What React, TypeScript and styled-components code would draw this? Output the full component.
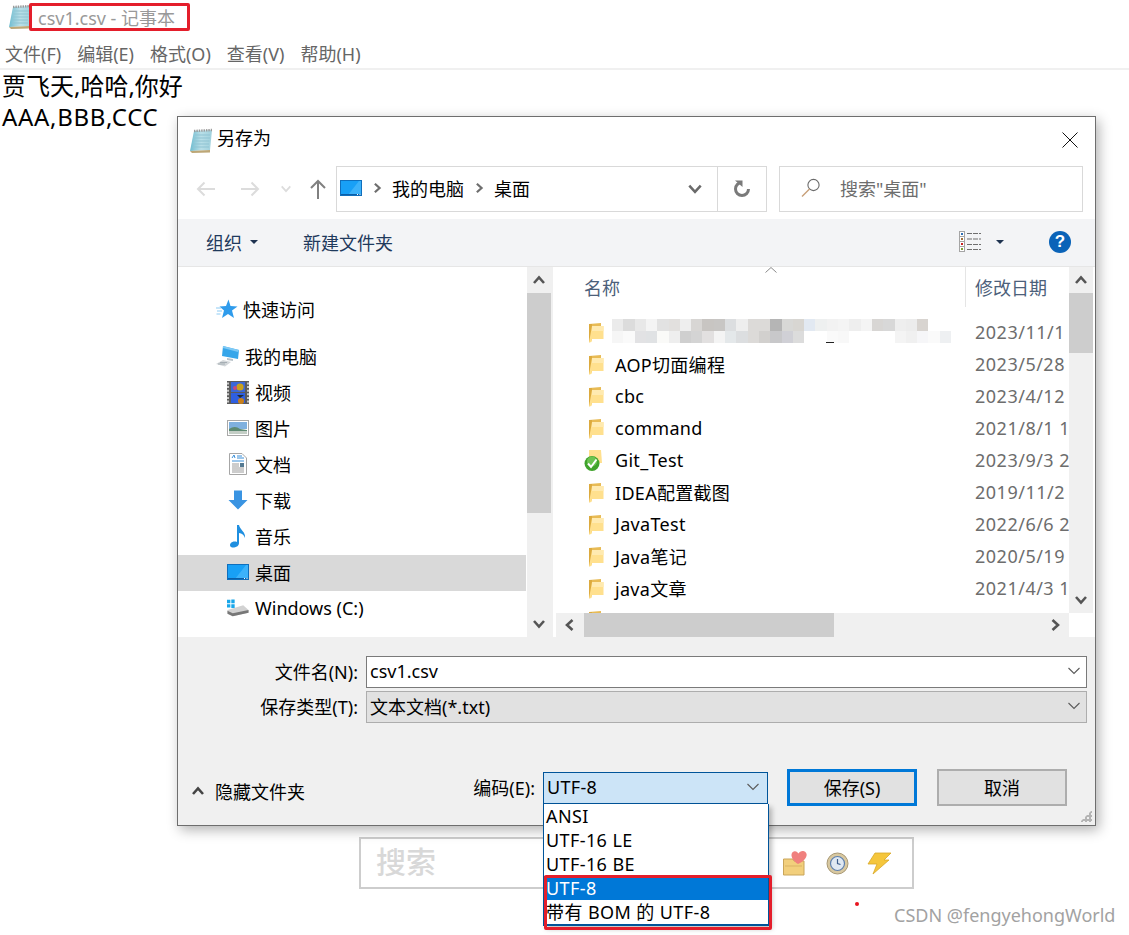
import React from 'react';
import styled, { createGlobalStyle } from 'styled-components';

const FONT = '"Noto Sans", "Noto Sans CJK SC", sans-serif';

const GlobalStyle = createGlobalStyle`
	html, body {
		margin: 0;
		padding: 0;
		background: #fff;
	}
	body {
		width: 1129px;
		height: 935px;
		overflow: hidden;
		font-family: ${FONT};
		color: #000;
	}
	* {
		box-sizing: border-box;
	}
`;

const NotepadIcon = ({ id }: { id: string }) => (
	<svg width="24" height="26" viewBox="0 0 24 26">
		<defs>
			<linearGradient id={id} x1="0" y1="0" x2="1" y2="0">
				<stop offset="0" stopColor="#6fbcd0" />
				<stop offset="0.5" stopColor="#b9dfe8" />
				<stop offset="1" stopColor="#9fd0dc" />
			</linearGradient>
		</defs>
		<path d="M5 3 L23 2 L21 22 L1 23 Z" fill={`url(#${id})`} />
		<path d="M6 7H21M5.5 10H21M5 13H20.5M4.5 16H20M4 19H20" stroke="#8fc3d2" strokeWidth="1" />
		<path d="M1 23 L21 22 L21 24.5 L3 25 Z" fill="#bda777" />
		<path d="M5 3 L23 2" stroke="#9a9a9a" strokeWidth="2.4" strokeDasharray="1.4 1" />
	</svg>
);

const DesktopIcon = ({ w, h }: { w: number; h: number }) => (
	<svg width={w} height={h} viewBox="0 0 22 16">
		<rect x="0.5" y="0.5" width="21" height="15" fill="#18a0f6" stroke="#0f6fbd" />
		<path d="M8 15 L19 1 H21 V15 Z" fill="#3cb2fa" />
		<path d="M1 14.5H21" stroke="#0b5ea8" />
		<path d="M17 14.5h1M19.5 14.5h1" stroke="#fff" />
	</svg>
);

const FolderIcon = () => (
	<svg width="16" height="21" viewBox="0 0 16 21">
		<path d="M1 2 L13 1 L13 5 L1 5 Z" fill="#e8bb55" />
		<path d="M1 2 L4 2 L4 18 L1 20.500 Z" fill="#dcaa3e" />
		<path d="M4 4 L15.500 4 L15.500 17 L4 17 L3.500 20 L1 20.500 Z" fill="#ffe08e" />
		<path d="M4 4 L15.500 4 L15.500 9 L4 9 Z" fill="#ffeab0" />
	</svg>
);

const GitFolderIcon = () => (
	<svg width="20" height="23" viewBox="0 0 20 23">
		<path d="M5 1 L17 1 L18 14 L5 14 Z" fill="#ffe08e" />
		<circle cx="8" cy="14.5" r="7.5" fill="#3fa32b" />
		<circle cx="8" cy="12.5" r="5" fill="#7fd062" opacity="0.7" />
		<path d="M4 14.5 L7 18 L12.5 10.5" fill="none" stroke="#fff" strokeWidth="2" />
	</svg>
);

const StarIcon = () => (
	<svg width="22" height="20" viewBox="0 0 22 20">
		<path d="M12.5 0.5 L14.5 7 L21.5 7.5 L16 11.5 L18 19 L12 15 L6 19 L8 11.5 L3.5 7.5 L10 7 Z" fill="#2f9cec" />
		<path d="M0 9h5M1 12h5M0.5 15h4" stroke="#8ccbf4" strokeWidth="1" />
	</svg>
);

const ComputerIcon = () => (
	<svg width="24" height="22" viewBox="0 0 24 22">
		<path d="M7 1 L23 5 L22 14 L6 11 Z" fill="#36a6ea" />
		<path d="M7 1 L23 5 L22 7 L7 3 Z" fill="#7fcaf5" />
		<path d="M11 13 L17 14 L17 16 L11 15 Z" fill="#b9c2c9" />
		<path d="M0 19 L7 15 L15 17 L9 21.5 Z" fill="#d3d7da" />
		<path d="M2 19h7M4 17.5h7" stroke="#9aa3aa" strokeWidth="0.8" />
	</svg>
);

const FilmIcon = () => (
	<svg width="22" height="23" viewBox="0 0 22 23">
		<rect width="22" height="23" fill="#5b5b5b" />
		<path d="M1 1.5v20M21 1.5v20" stroke="#e6e6e6" strokeWidth="1.6" strokeDasharray="2 1.6" />
		<rect x="4" y="1" width="14" height="10" fill="#3b67d8" />
		<rect x="4" y="12" width="14" height="10" fill="#2f5fe0" />
		<circle cx="13" cy="6" r="3.6" fill="#c9a01c" />
		<circle cx="8" cy="7" r="2" fill="#c84a7a" />
		<circle cx="14" cy="20" r="3" fill="#c9801c" />
		<path d="M10 14 L17 14 L13 17 Z" fill="#1e2a33" />
	</svg>
);

const PictureIcon = () => (
	<svg width="22" height="16" viewBox="0 0 22 16">
		<rect x="0.5" y="0.5" width="21" height="15" fill="#fff" stroke="#a8a8a8" />
		<rect x="2" y="2" width="18" height="7" fill="#7fb0de" />
		<path d="M2 9 Q8 5 13 9 L20 10 V14 H2 Z" fill="#5e8a72" />
		<rect x="2" y="11" width="18" height="3" fill="#c4cec6" />
	</svg>
);

const DocIcon = () => (
	<svg width="18" height="22" viewBox="0 0 18 22">
		<path d="M0.5 0.5 H13 L17.5 5 V21.5 H0.5 Z" fill="#fff" stroke="#a6a6a6" />
		<path d="M3 5l2-3 1 3M8 3h5M8 5h7M3 8h12" stroke="#3a8fd8" strokeWidth="1" fill="none" />
		<path d="M3 11h7M3 13h7M3 15h12M3 17h12M3 19h12" stroke="#9a9a9a" strokeWidth="1" />
		<rect x="11" y="10" width="4" height="4" fill="#557a92" />
	</svg>
);

const DownloadIcon = () => (
	<svg width="20" height="20" viewBox="0 0 20 20">
		<path d="M6 0.5 H14 V10 H19.5 L10 19.5 L0.5 10 H6 Z" fill="#3a94e2" />
	</svg>
);

const MusicIcon = () => (
	<svg width="18" height="23" viewBox="0 0 18 23">
		<path d="M8 0 L10 0 C11 5 17 7 16 13 C15 10 13 8.5 10 8 L10 18 C10 21 7 22.5 4 22.5 C1 22.5 0.5 20 1.5 18.5 C3 16.5 6 16 8 17 Z" fill="#1f8fe0" />
	</svg>
);

const DriveIcon = () => (
	<svg width="23" height="18" viewBox="0 0 23 18">
		<path d="M0.5 11 L17 6 L22.5 11 L22.5 14 L6 17.5 L0.5 15 Z" fill="#d2d2d2" />
		<path d="M0.5 12 L6 14.5 L22.5 11 L22.5 14 L6 17.5 L0.5 15 Z" fill="#777" />
		<path d="M0 0.5h3.5v3.5h-3.5zM4.5 0h3.5v4h-3.5zM0 5h3.5v3.5h-3.5zM4.5 5h3.5v4h-3.5z" fill="#19a7ea" />
	</svg>
);

const Chevron = ({ dir, color = '#555', size = 14, weight = 2.6 }: { dir: 'up' | 'down' | 'left' | 'right'; color?: string; size?: number; weight?: number }) => {
	const d = {
		up: 'M2 10 L7 4.5 L12 10',
		down: 'M2 4 L7 9.5 L12 4',
		left: 'M9.5 2 L4 7 L9.5 12',
		right: 'M4.5 2 L10 7 L4.5 12',
	}[dir];
	return (
		<svg width={size} height={size} viewBox="0 0 14 14">
			<path d={d} fill="none" stroke={color} strokeWidth={weight} />
		</svg>
	);
};

const ComboArrow = () => (
	<svg width="12" height="8" viewBox="0 0 12 8">
		<path d="M0.5 1 L6 6.5 L11.5 1" fill="none" stroke="#5a5a5a" strokeWidth="1.1" />
	</svg>
);

const Caret = () => (
	<svg width="8" height="4" viewBox="0 0 8 4">
		<path d="M0 0 H8 L4 4 Z" fill="#1f3350" />
	</svg>
);

const NavArrow = ({ flip, color }: { flip?: boolean; color: string }) => (
	<svg width="20" height="16" viewBox="0 0 20 16" style={flip ? { transform: 'scaleX(-1)' } : undefined}>
		<path d="M19 8 H2 M8.5 1.5 L2 8 L8.5 14.5" fill="none" stroke={color} strokeWidth="2" />
	</svg>
);

const UpArrow = () => (
	<svg width="16" height="20" viewBox="0 0 16 20">
		<path d="M8 20 V2 M1 9 L8 2 L15 9" fill="none" stroke="#808080" strokeWidth="2" />
	</svg>
);

const RefreshIcon = () => (
	<svg width="18" height="18" viewBox="0 0 18 18">
		<path d="M15.5 9 A6.5 6.5 0 1 1 9 2.5" fill="none" stroke="#7a7a7a" strokeWidth="3" />
		<path d="M2 0.5 H9.5 V7 Z" fill="#7a7a7a" />
	</svg>
);

const SearchGlass = () => (
	<svg width="20" height="20" viewBox="0 0 20 20">
		<circle cx="12.5" cy="7" r="5.6" fill="none" stroke="#6b6b6b" strokeWidth="1.1" />
		<path d="M8.5 11 L1 18.5" stroke="#c8a079" strokeWidth="1.4" />
	</svg>
);

const CloseIcon = () => (
	<svg width="16" height="16" viewBox="0 0 16 16">
		<path d="M0.5 0.5 L15.5 15.5 M15.5 0.5 L0.5 15.5" stroke="#111" strokeWidth="1" />
	</svg>
);

const ViewIcon = () => (
	<svg width="22" height="21" viewBox="0 0 22 21">
		<rect x="0.5" y="0.5" width="5" height="20" fill="#fff" stroke="#a5a5a5" />
		<path d="M1 5.5h5M1 10.5h5M1 15.5h5" stroke="#a5a5a5" />
		<rect x="2" y="2" width="2" height="2" fill="#2f6fb5" />
		<rect x="2" y="7" width="2" height="2" fill="#a0703a" />
		<rect x="2" y="12" width="2" height="2" fill="#c92020" />
		<rect x="2" y="17" width="2" height="2" fill="#7fa038" />
		<path d="M8 2.5h14M8 8h14M8 13.500h14M8 18.500h14" stroke="#6f6f6f" strokeDasharray="5 1" />
	</svg>
);

const HelpBadge = styled.span`
	display: flex;
	align-items: center;
	justify-content: center;
	width: 22px;
	height: 22px;
	border-radius: 50%;
	background: #0a63b8;
	color: #fff;
	font: bold 17px "Liberation Sans", sans-serif;
`;

const FolderHeart = () => (
	<svg width="25" height="26" viewBox="0 0 25 26">
		<path d="M0.500 9 H10 L11 11 H21 V25 H0.500 Z" fill="#f2cf7c" stroke="#c9a55a" />
		<path d="M2 16h17" stroke="#d9b364" />
		<path d="M15 14 C7 9 7 2 11.500 1.200 C13.500 1 14.500 2 15.500 3.500 C16.500 2 18.500 0.500 21 1.200 C26 3 24 10 15 14 Z" fill="#f0807e" />
	</svg>
);

const ClockIcon = () => (
	<svg width="23" height="23" viewBox="0 0 23 23">
		<circle cx="11.500" cy="11.500" r="10.500" fill="#d8c8a0" stroke="#a89874" />
		<circle cx="11.500" cy="11.500" r="7" fill="#dfe8f2" stroke="#5d7fae" strokeWidth="1.2" />
		<path d="M11.500 7v4.500l3 1" fill="none" stroke="#3d5f8e" strokeWidth="1.2" />
	</svg>
);

const BoltIcon = () => (
	<svg width="25" height="23" viewBox="0 0 25 23">
		<path d="M8 1 H24 L17 8 H22 L6 22 L10 12 H1 Z" fill="#f5c63c" stroke="#d8a828" strokeWidth="0.8" />
	</svg>
);

const MOSAIC: string[][] = [
	['ebebeb', 'dcdcdc', 'e8e8e8', 'f4f4f4', 'e2e2e2', 'e2e0de', 'eeeeee', 'd8d6d4', 'c8c5c2', 'c8c6c4', 'dcdee0', 'eeeeee', 'dcdad8', 'dcdad8', 'b5b5b5', 'd8d8d6', 'd8d6d2', 'e2e9f2', 'eef0f0', 'f2f2f2', 'f4f4f4', 'eeeeee', 'f4f4f4', 'd8d6d4', 'd8d8d8', 'eeeeee', 'ececec', 'd8d4d0', 'ffffff', 'ffffff'],
	['f6f6f6', 'fafafa', 'e2e2e4', 'e0e2e4', 'fafaf8', 'eeeeee', 'cfcfcf', 'd4d4d4', 'e2e0e0', 'f4f4f4', 'e4e8ea', 'dcdee0', 'dcdad8', 'd2d0ce', 'c8c8ca', 'd0d0d6', 'dcdcdc', 'ffffff', 'ffffff', 'fafafa', 'f8f8f8', 'ffffff', 'ffffff', 'ffffff', 'ffffff', 'f4f4f4', 'f0f0f0', 'f6f6f8', 'fafafa', 'eef0f2'],
];

const Mosaic = () => (
	<svg width="339" height="25" viewBox="0 0 339 25" shapeRendering="crispEdges">
		{MOSAIC.map((row, r) =>
			row.map((c, i) => <rect key={`${r}-${i}`} x={i * 11.3} y={r * 12} width="11.4" height="12" fill={`#${c}`} />),
		)}
		<rect x="214" y="23" width="8" height="1" fill="#222" />
	</svg>
);

const sideItems: { label: string; icon: React.ReactNode; active?: boolean }[] = [
	{ label: '视频', icon: <FilmIcon /> },
	{ label: '图片', icon: <PictureIcon /> },
	{ label: '文档', icon: <DocIcon /> },
	{ label: '下载', icon: <DownloadIcon /> },
	{ label: '音乐', icon: <MusicIcon /> },
	{ label: '桌面', icon: <DesktopIcon w={22} h={16} />, active: true },
	{ label: 'Windows (C:)', icon: <DriveIcon /> },
];

const files: { name: string; date: string; git?: boolean }[] = [
	{ name: 'AOP切面编程', date: '2023/5/28' },
	{ name: 'cbc', date: '2023/4/12' },
	{ name: 'command', date: '2021/8/1 1' },
	{ name: 'Git_Test', date: '2023/9/3 2', git: true },
	{ name: 'IDEA配置截图', date: '2019/11/2' },
	{ name: 'JavaTest', date: '2022/6/6 2' },
	{ name: 'Java笔记', date: '2020/5/19' },
	{ name: 'java文章', date: '2021/4/3 1' },
];

const encodings = ['ANSI', 'UTF-16 LE', 'UTF-16 BE', 'UTF-8', '带有 BOM 的 UTF-8'];

const App = () => {
	return (
		<Page>
			<GlobalStyle />
			<NoteTitleBar>
				<NotepadIcon id="note-a" />
				<NoteTitle>csv1.csv - 记事本</NoteTitle>
				<TitleMark />
			</NoteTitleBar>
			<MenuBar>
				<span>文件(F)</span>
				<span>编辑(E)</span>
				<span>格式(O)</span>
				<span>查看(V)</span>
				<span>帮助(H)</span>
			</MenuBar>
			<Editor>
				<div>贾飞天,哈哈,你好</div>
				<LatinLine>AAA,BBB,CCC</LatinLine>
			</Editor>
			<PageSearch>
				<PageSearchText>搜索</PageSearchText>
				<PageSearchIcons>
					<FolderHeart />
					<ClockIcon />
					<BoltIcon />
				</PageSearchIcons>
			</PageSearch>
			<RedDot />
			<Watermark>CSDN @fengyehongWorld</Watermark>

			<Dialog>
				<DialogHeader>
					<NotepadIcon id="note-b" />
					<DialogTitle>另存为</DialogTitle>
					<CloseButton>
						<CloseIcon />
					</CloseButton>
				</DialogHeader>
				<NavRow>
					<NavButtons>
						<NavArrow color="#dcdcdc" />
						<NavArrow flip color="#dcdcdc" />
						<Chevron dir="down" color="#dcdcdc" size={12} weight={2} />
						<UpArrow />
					</NavButtons>
					<AddressBox>
						<AddressPath>
							<DesktopIcon w={22} h={16} />
							<Chevron dir="right" color="#6e6e6e" size={12} />
							<span>我的电脑</span>
							<Chevron dir="right" color="#6e6e6e" size={12} />
							<span>桌面</span>
						</AddressPath>
						<AddressDrop>
							<Chevron dir="down" color="#6a6a6a" size={16} weight={2.2} />
						</AddressDrop>
						<AddressRefresh>
							<RefreshIcon />
						</AddressRefresh>
					</AddressBox>
					<SearchBox>
						<SearchGlass />
						<span>搜索"桌面"</span>
					</SearchBox>
				</NavRow>
				<Toolbar>
					<ToolButton>
						组织
						<Caret />
					</ToolButton>
					<ToolText>新建文件夹</ToolText>
					<ToolRight>
						<ViewIcon />
						<Caret />
						<HelpBadge>?</HelpBadge>
					</ToolRight>
				</Toolbar>
				<Body>
					<Sidebar>
						<SideTop>
							<StarIcon />
							<span>快速访问</span>
						</SideTop>
						<SideTop>
							<ComputerIcon />
							<span>我的电脑</span>
						</SideTop>
						{sideItems.map((item) => (
							<SideRow key={item.label} $active={item.active}>
								<SideIcon>{item.icon}</SideIcon>
								<span>{item.label}</span>
							</SideRow>
						))}
					</Sidebar>
					<VScroll>
						<ScrollEnd>
							<Chevron dir="up" />
						</ScrollEnd>
						<ScrollTrack>
							<Thumb $h={220} />
						</ScrollTrack>
						<ScrollEnd>
							<Chevron dir="down" />
						</ScrollEnd>
					</VScroll>
					<PaneGap />
					<FilePane>
						<FileMain>
							<FileHeader>
								<SortMark>
									<svg width="12" height="6" viewBox="0 0 12 6">
										<path d="M0.500 5.500 L6 0.500 L11.500 5.500" fill="none" stroke="#8a8a8a" />
									</svg>
								</SortMark>
								<NameHead>名称</NameHead>
								<DateHead>修改日期</DateHead>
							</FileHeader>
							<FileRow>
								<FileIcon>
									<FolderIcon />
								</FileIcon>
								<FileName>
									<MosaicSlot>
										<Mosaic />
									</MosaicSlot>
								</FileName>
								<FileDate>2023/11/1</FileDate>
							</FileRow>
							{files.map((f) => (
								<FileRow key={f.name}>
									<FileIcon>{f.git ? <GitFolderIcon /> : <FolderIcon />}</FileIcon>
									<FileName>{f.name}</FileName>
									<FileDate>{f.date}</FileDate>
								</FileRow>
							))}
							<FileRow>
								<FileIcon>
									<FolderIcon />
								</FileIcon>
							</FileRow>
						</FileMain>
						<VScroll>
							<ScrollEnd>
								<Chevron dir="up" />
							</ScrollEnd>
							<ScrollTrack>
								<Thumb $h={60} />
							</ScrollTrack>
							<ScrollEnd>
								<Chevron dir="down" />
							</ScrollEnd>
						</VScroll>
						<HScroll>
							<HScrollEnd>
								<Chevron dir="left" />
							</HScrollEnd>
							<HThumb />
							<HScrollEnd $end>
								<Chevron dir="right" />
							</HScrollEnd>
						</HScroll>
					</FilePane>
				</Body>
				<BottomPanel>
					<FormGrid>
						<FieldLabel>文件名(N):</FieldLabel>
						<Combo $kind="input">
							<span>csv1.csv</span>
							<ComboArrow />
						</Combo>
						<FieldLabel>保存类型(T):</FieldLabel>
						<Combo $kind="disabled">
							<span>文本文档(*.txt)</span>
							<ComboArrow />
						</Combo>
					</FormGrid>
					<ActionRow>
						<HideFolders>
							<Chevron dir="up" color="#444" size={14} />
							<span>隐藏文件夹</span>
						</HideFolders>
						<EncodingLabel>编码(E):</EncodingLabel>
						<EncodingSelect>
							<EncodingValue>
								<span>UTF-8</span>
								<ComboArrow />
							</EncodingValue>
							<EncodingList>
								{encodings.map((e) => (
									<EncodingItem key={e} $selected={e === 'UTF-8'}>
										{e}
									</EncodingItem>
								))}
								<ListMark />
							</EncodingList>
						</EncodingSelect>
						<DialogButton $primary>保存(S)</DialogButton>
						<DialogButton>取消</DialogButton>
					</ActionRow>
					<Grip />
				</BottomPanel>
			</Dialog>
		</Page>
	);
};

export default App;

const Page = styled.div`
	position: relative;
	width: 1129px;
	height: 935px;
	overflow: hidden;
	background: #fff;
`;

const NoteTitleBar = styled.div`
	position: relative;
	display: flex;
	align-items: center;
	gap: 6px;
	height: 36px;
	padding: 0 0 2px 8px;
`;

const NoteTitle = styled.span`
	font-size: 18px;
	color: #999;
`;

const TitleMark = styled.div`
	position: absolute;
	left: 29px;
	top: 3px;
	width: 161px;
	height: 28px;
	border: 3px solid #e41e2b;
	border-radius: 2px;
`;

const MenuBar = styled.div`
	display: flex;
	gap: 16px;
	align-items: center;
	height: 34px;
	padding: 1px 0 0 5px;
	border-bottom: 2px solid #f0f0f0;
	font-size: 18px;
	color: #666;
`;

const Editor = styled.div`
	padding-left: 2px;
	height: 64px;
	font-size: 24px;
	line-height: 32px;
`;

const LatinLine = styled.div`
	letter-spacing: 0.7px;
	margin-top: -1px;
`;

const PageSearch = styled.div`
	display: flex;
	align-items: center;
	justify-content: space-between;
	width: 555px;
	height: 52px;
	margin: 703px 0 0 359px;
	padding: 0 20px 6px 15px;
	border: 2px solid #cdcdcd;
`;

const PageSearchText = styled.span`
	font-size: 30px;
	color: #d8d8d8;
	font-weight: 500;
`;

const PageSearchIcons = styled.div`
	display: flex;
	align-items: center;
	gap: 18px;
	margin-top: 6px;
`;

const RedDot = styled.div`
	position: absolute;
	left: 855px;
	top: 902px;
	width: 4px;
	height: 4px;
	border-radius: 50%;
	background: #e8141e;
`;

const Watermark = styled.div`
	position: absolute;
	left: 894px;
	top: 903px;
	font-size: 18px;
	color: #a2a2a2;
	white-space: nowrap;
`;

const Dialog = styled.div`
	position: absolute;
	left: 177px;
	top: 116px;
	width: 919px;
	height: 710px;
	display: flex;
	flex-direction: column;
	background: #fff;
	border: 1px solid #6e6e6e;
	box-shadow: 3px 4px 12px rgba(0, 0, 0, 0.3);
	font-size: 18px;
`;

const DialogHeader = styled.div`
	display: flex;
	align-items: center;
	gap: 4px;
	height: 49px;
	padding: 0 17px 2px 11px;
`;

const DialogTitle = styled.span`
	font-size: 18px;
	margin-top: -7px;
`;

const CloseButton = styled.div`
	display: flex;
	margin-left: auto;
	margin-top: -2px;
`;

const NavRow = styled.div`
	display: flex;
	height: 46px;
	margin-bottom: 7px;
	padding-right: 12px;
`;

const NavButtons = styled.div`
	display: flex;
	align-items: center;
	gap: 24px;
	width: 158px;
	padding-left: 18px;
	& > :nth-child(3) {
		margin-left: -4px;
	}
	& > :nth-child(4) {
		margin-left: -6px;
	}
`;

const AddressBox = styled.div`
	display: flex;
	width: 431px;
	border: 1px solid #d9d9d9;
	margin-right: 12px;
`;

const AddressPath = styled.div`
	display: flex;
	align-items: center;
	gap: 9px;
	flex: 1;
	padding: 0 0 2px 3px;
	font-size: 18px;
`;

const AddressDrop = styled.div`
	display: flex;
	align-items: center;
	padding-right: 14px;
`;

const AddressRefresh = styled.div`
	display: flex;
	align-items: center;
	justify-content: center;
	width: 49px;
	border-left: 1px solid #d9d9d9;
`;

const SearchBox = styled.div`
	display: flex;
	align-items: center;
	gap: 19px;
	flex: 1;
	padding: 0 0 2px 21px;
	border: 1px solid #d9d9d9;
	font-size: 18px;
	color: #6d6d6d;
`;

const Toolbar = styled.div`
	display: flex;
	align-items: center;
	height: 48px;
	padding: 0 24px 2px 28px;
	background: #f3f4f6;
	border-bottom: 1px solid #e6e6e6;
	color: #1f3a5c;
	font-size: 18px;
`;

const ToolButton = styled.div`
	display: flex;
	align-items: center;
	gap: 8px;
`;

const ToolText = styled.span`
	margin-left: 45px;
`;

const ToolRight = styled.div`
	display: flex;
	align-items: center;
	margin-left: auto;
	gap: 15px;
	& > :last-child {
		margin-left: 30px;
	}
`;

const Body = styled.div`
	display: flex;
	height: 370px;
	background: #fff;
`;

const Sidebar = styled.div`
	width: 349px;
	padding: 25px 1px 0 0;
	overflow: hidden;
`;

const SideTop = styled.div`
	display: flex;
	align-items: center;
	justify-content: flex-start;
	gap: 5px;
	height: 36px;
	padding: 0 0 3px 38px;
	margin-bottom: 11px;
	font-size: 18px;
	&:nth-child(2) {
		margin-bottom: 0;
	}
`;

const SideRow = styled.div<{ $active?: boolean }>`
	display: flex;
	align-items: center;
	height: 36px;
	padding: 0 0 2px 49px;
	font-size: 18px;
	background: ${(p) => (p.$active ? '#d9d9d9' : 'transparent')};
`;

const SideIcon = styled.span`
	display: flex;
	align-items: center;
	justify-content: center;
	width: 22px;
	margin-right: 6px;
`;

const VScroll = styled.div`
	display: flex;
	flex-direction: column;
	width: 24px;
	flex-shrink: 0;
	background: #f0f0f0;
`;

const ScrollEnd = styled.div`
	display: flex;
	align-items: center;
	justify-content: center;
	height: 26px;
	flex-shrink: 0;
`;

const ScrollTrack = styled.div`
	flex: 1;
`;

const Thumb = styled.div<{ $h: number }>`
	height: ${(p) => p.$h}px;
	background: #cdcdcd;
`;

const PaneGap = styled.div`
	width: 5px;
	border-left: 2px solid #f0f0f0;
`;

const FilePane = styled.div`
	display: grid;
	grid-template-columns: 513px 24px;
	grid-template-rows: 346px 24px;
	flex: 1;
	min-width: 0;
`;

const FileMain = styled.div`
	overflow: hidden;
`;

const FileHeader = styled.div`
	position: relative;
	display: flex;
	align-items: center;
	height: 49px;
	padding: 0 0 9px 28px;
	font-size: 18px;
	color: #4c607a;
`;

const SortMark = styled.span`
	position: absolute;
	left: 209px;
	top: 0;
	display: flex;
`;

const NameHead = styled.span`
	width: 381px;
	padding-bottom: 1px;
`;

const DateHead = styled.span`
	align-self: stretch;
	display: flex;
	align-items: center;
	flex: 1;
	padding: 0 0 1px 9px;
	border-left: 1px solid #e5e5e5;
`;

const FileRow = styled.div`
	display: flex;
	align-items: center;
	height: 32px;
	white-space: nowrap;
	font-size: 18px;
`;

const FileIcon = styled.span`
	display: flex;
	justify-content: flex-end;
	flex-shrink: 0;
	width: 48px;
	margin-right: 11px;
`;

const FileName = styled.span`
	display: flex;
	flex-shrink: 0;
	width: 360px;
	letter-spacing: 0.3px;
	padding-bottom: 1px;
`;

const MosaicSlot = styled.span`
	display: flex;
	margin-left: -3px;
`;

const FileDate = styled.span`
	flex-shrink: 0;
	color: #6d6d6d;
	letter-spacing: 0.5px;
	padding-bottom: 1px;
`;

const HScroll = styled.div`
	display: flex;
	background: #f0f0f0;
`;

const HScrollEnd = styled.div<{ $end?: boolean }>`
	display: flex;
	align-items: center;
	justify-content: center;
	width: 28px;
	margin-left: ${(p) => (p.$end ? 'auto' : '0')};
`;

const HThumb = styled.div`
	width: 250px;
	background: #cdcdcd;
`;

const BottomPanel = styled.div`
	position: relative;
	flex: 1;
	background: #f0f0f0;
	padding-top: 19px;
`;

const FormGrid = styled.div`
	display: grid;
	grid-template-columns: 180px 721px;
	column-gap: 8px;
	row-gap: 3px;
	align-items: center;
`;

const FieldLabel = styled.span`
	text-align: right;
	font-size: 18px;
	padding-bottom: 2px;
`;

const Combo = styled.div<{ $kind: 'input' | 'disabled' }>`
	display: flex;
	align-items: center;
	justify-content: space-between;
	height: 32px;
	padding: 0 6px 2px 3px;
	font-size: 18px;
	border: 1px solid ${(p) => (p.$kind === 'input' ? '#7a7a7a' : '#adadad')};
	background: ${(p) => (p.$kind === 'input' ? '#fff' : '#e1e1e1')};
`;

const ActionRow = styled.div`
	display: flex;
	align-items: center;
	height: 37px;
	margin-top: 46px;
	padding: 0 28px 0 13px;
`;

const HideFolders = styled.div`
	display: flex;
	align-items: center;
	gap: 10px;
	margin-top: 6px;
	font-size: 18px;
`;

const EncodingLabel = styled.span`
	margin-left: auto;
	margin-right: 8px;
	font-size: 18px;
	padding-bottom: 2px;
`;

const EncodingSelect = styled.div`
	position: relative;
	width: 225px;
	margin-right: 19px;
`;

const EncodingValue = styled.div`
	display: flex;
	align-items: center;
	justify-content: space-between;
	height: 32px;
	padding: 0 8px 2px 3px;
	background: #cce4f7;
	border: 1px solid #005499;
	font-size: 18px;
	letter-spacing: 0.3px;
`;

const EncodingList = styled.div`
	position: absolute;
	top: 100%;
	left: 0;
	width: 226px;
	background: #fff;
	border: 1px solid #005499;
	border-top: none;
	border-bottom-width: 2px;
	box-shadow: 3px 3px 5px rgba(0, 0, 0, 0.25);
	font-size: 18px;
	letter-spacing: 0.4px;
	z-index: 2;
`;

const EncodingItem = styled.div<{ $selected?: boolean }>`
	height: 24px;
	line-height: 24px;
	padding-left: 2px;
	white-space: nowrap;
	background: ${(p) => (p.$selected ? '#0078d7' : 'transparent')};
	color: ${(p) => (p.$selected ? '#fff' : '#000')};
`;

const ListMark = styled.div`
	position: absolute;
	left: 0;
	top: 71px;
	width: 228px;
	height: 55px;
	border: 3px solid #e41e2b;
	border-radius: 2px;
`;

const DialogButton = styled.div<{ $primary?: boolean }>`
	display: flex;
	align-items: center;
	justify-content: center;
	width: 130px;
	height: 37px;
	padding-bottom: 2px;
	font-size: 18px;
	background: #e1e1e1;
	border: ${(p) => (p.$primary ? '3px solid #0078d7' : '2px solid #adadad')};
	margin-right: ${(p) => (p.$primary ? '20px' : '0')};
`;

const Grip = styled.div`
	position: absolute;
	right: 3px;
	bottom: 3px;
	width: 12px;
	height: 12px;
	background-image: radial-gradient(#b4b4b4 1.6px, transparent 1.7px);
	background-size: 4px 4px;
	clip-path: polygon(100% 0, 100% 100%, 0 100%);
`;
